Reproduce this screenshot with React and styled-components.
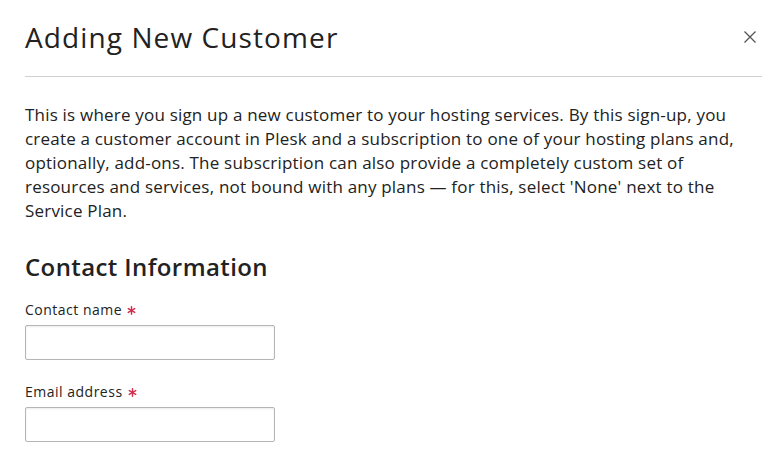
import styled, { createGlobalStyle } from 'styled-components';

const GlobalStyle = createGlobalStyle`
  html, body {
    margin: 0;
    padding: 0;
    background: #fff;
  }
  body {
    font-family: "Open Sans", "Liberation Sans", sans-serif;
    color: #222;
    overflow: hidden;
  }
`;

const Dialog = styled.div`
  width: 762px;
  height: 465px;
  box-sizing: border-box;
  padding: 0 20px 0 25px;
  background: #fff;
`;

const Header = styled.div`
  display: flex;
  align-items: flex-start;
  justify-content: space-between;
  height: 77px;
  margin-right: -20px;
  padding-right: 6px;
  border-bottom: 1px solid #d1d1d1;
  box-sizing: border-box;
`;

const Title = styled.h1`
  margin: 17px 0 0;
  font-size: 28px;
  font-weight: 400;
  letter-spacing: 1.1px;
  line-height: 40px;
  color: #222;
`;

const CloseButton = styled.button`
  margin-top: 31px;
  width: 12px;
  height: 12px;
  padding: 0;
  border: none;
  background: none;
  cursor: pointer;
  display: flex;
`;

const Intro = styled.p`
  margin: 26px 0 0;
  font-size: 17px;
  letter-spacing: 0.2px;
  line-height: 24px;
  color: #222;
`;

const SectionTitle = styled.h2`
  margin: 29px 0 0;
  font-size: 24px;
  font-weight: 600;
  letter-spacing: 0.4px;
  line-height: 29px;
  color: #222;
`;

const Form = styled.div`
  display: flex;
  flex-direction: column;
  gap: 22px;
  margin-top: 19px;
`;

const Field = styled.div`
  display: flex;
  flex-direction: column;
  gap: 5px;
`;

const Label = styled.label`
  display: flex;
  align-items: center;
  gap: 5px;
  font-size: 14px;
  letter-spacing: 0.5px;
  line-height: 20px;
  color: #222;
`;

const Input = styled.input`
  width: 250px;
  height: 35px;
  box-sizing: border-box;
  border: 1px solid #b5b5b5;
  border-radius: 2px;
  box-shadow: inset 0 1px 2px rgba(0, 0, 0, 0.08);
  padding: 0 8px;
  font: inherit;
  font-size: 14px;
  outline: none;
`;

function Required() {
  return (
    <svg width="9" height="9" viewBox="0 0 10 10" style={{ marginTop: 1 }}>
      <g stroke="#d02d4c" strokeWidth="1.6" strokeLinecap="round">
        <line x1="5" y1="0.8" x2="5" y2="9.2" />
        <line x1="1.4" y1="2.9" x2="8.6" y2="7.1" />
        <line x1="1.4" y1="7.1" x2="8.6" y2="2.9" />
      </g>
    </svg>
  );
}

export default function App() {
  return (
    <>
      <GlobalStyle />
      <Dialog>
        <Header>
          <Title>Adding New Customer</Title>
          <CloseButton aria-label="Close">
            <svg width="12" height="12" viewBox="0 0 12 12">
              <path d="M0.5 0.5 L11.5 11.5 M11.5 0.5 L0.5 11.5" stroke="#555" strokeWidth="1.3" />
            </svg>
          </CloseButton>
        </Header>
        <Intro>
          This is where you sign up a new customer to your hosting services. By this sign-up, you
          create a customer account in Plesk and a subscription to one of your hosting plans and,
          optionally, add-ons. The subscription can also provide a completely custom set of
          resources and services, not bound with any plans — for this, select 'None' next to the
          Service Plan.
        </Intro>
        <SectionTitle>Contact Information</SectionTitle>
        <Form>
          <Field>
            <Label>Contact name <Required /></Label>
            <Input type="text" />
          </Field>
          <Field>
            <Label>Email address <Required /></Label>
            <Input type="email" />
          </Field>
        </Form>
      </Dialog>
    </>
  );
}
